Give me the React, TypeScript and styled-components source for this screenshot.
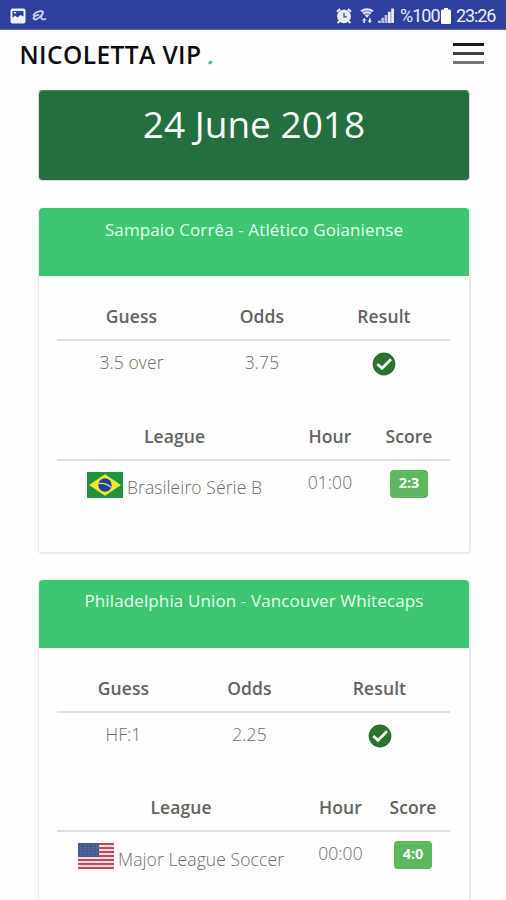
import React from 'react';
import styled, { createGlobalStyle } from 'styled-components';

const GlobalStyle = createGlobalStyle`
  * { box-sizing: border-box; }
  body {
    margin: 0;
    background: #fefefe;
    font-family: 'Open Sans', 'Noto Sans', sans-serif;
    overflow: hidden;
  }
`;

const Screen = styled.div`
  width: 506px;
  height: 900px;
  overflow: hidden;
`;

const StatusBar = styled.div`
  display: flex;
  align-items: center;
  justify-content: space-between;
  height: 30px;
  padding: 0 10px;
  background: #2f3f9e;
  border-bottom: 1px solid #6570b6;
  color: #e9ecf8;
`;

const StatusGroup = styled.div`
  display: flex;
  align-items: center;
  height: 29px;
  padding-top: 2px;
`;

const StatusText = styled.span<{ $width: number; $spacing: number }>`
  width: ${p => p.$width}px;
  font: 400 18px/28px Roboto, sans-serif;
  letter-spacing: ${p => p.$spacing}px;
  white-space: nowrap;
`;

const StatusIcon = styled.svg<{ $gap: number }>`
  display: block;
  flex: none;
  margin-right: ${p => p.$gap}px;
`;

const Header = styled.header`
  display: flex;
  align-items: flex-start;
  justify-content: space-between;
  height: 60px;
  padding: 7px 22px 0 19.5px;
`;

const Brand = styled.h1`
  margin: 0;
  font-size: 24.5px;
  line-height: 34px;
  font-weight: 650;
  letter-spacing: 0.42px;
  color: #0c0c0c;
  white-space: nowrap;
`;

const BrandDot = styled.span`
  display: inline-block;
  margin-left: 2px;
  color: #45c878;
  font-size: 25px;
  transform: skewX(-20deg);
`;

const MenuButton = styled.button`
  display: flex;
  flex-direction: column;
  gap: 6px;
  margin: 6px 0 0;
  padding: 0;
  border: 0;
  background: none;
`;

const MenuLine = styled.span<{ $color: string }>`
  width: 31px;
  height: 3px;
  background: ${p => p.$color};
`;

const Content = styled.main`
  display: flex;
  flex-direction: column;
  padding: 0 35px 0 38px;
`;

const DateCard = styled.section`
  height: 91px;
  margin-bottom: 27px;
  margin-right: 1px;
  border: 1px solid #d5ddd8;
  border-top-color: #4d8a63;
  border-radius: 4px;
  background: #246e40;
  background-clip: padding-box;
  color: #fafdfb;
  font-size: 37px;
  line-height: 65px;
  text-align: center;
`;

const Card = styled.article`
  height: 346px;
  margin-bottom: 25.6px;
  border: 2px solid #ebebeb;
  border-top: 0;
  border-left-width: 1px;
  border-radius: 4px;
  background: #fefefe;
`;

const CardTitle = styled.h2`
  height: 68px;
  margin: 0;
  padding-top: 8.7px;
  border-radius: 4px 4px 0 0;
  background: #3fc672;
  color: #e4fbec;
  font-size: 17px;
  line-height: 26px;
  font-weight: 400;
  letter-spacing: 0.12px;
  text-align: center;
  white-space: nowrap;
`;

const Table = styled.div<{ $height: number }>`
  width: 393px;
  height: ${p => p.$height}px;
  margin-left: 18px;
`;

const Row = styled.div<{ $columns: string }>`
  display: grid;
  grid-template-columns: ${p => p.$columns};
`;

const HeadRow = styled(Row)`
  height: 65px;
  padding-top: 28px;
  border-bottom: 2px solid #dedede;
`;

const HeadCell = styled.div`
  color: #626262;
  font-size: 17.5px;
  line-height: 24px;
  font-weight: 600;
  letter-spacing: 0.1px;
  text-align: center;
`;

const Cell = styled.div`
  padding-top: 9px;
  color: #6c6c6c;
  font-size: 17.5px;
  line-height: 24px;
  font-weight: 300;
  letter-spacing: 0.1px;
  text-align: center;
  white-space: nowrap;
`;

const IconCell = styled(Cell)`
  display: flex;
  justify-content: center;
  padding-top: 11px;
`;

const LeagueCell = styled(Cell)`
  display: flex;
  justify-content: center;
  gap: 4px;
  padding-top: 11px;
`;

const LeagueName = styled.span`
  padding-top: 3.6px;
`;

const Score = styled.span`
  display: block;
  width: 38px;
  height: 28px;
  margin: 0 auto;
  border-radius: 4px;
  background: #5bb85c;
  color: #fff;
  font-size: 14.5px;
  line-height: 26px;
  font-weight: 700;
  letter-spacing: 0;
`;

const CheckIcon = () => (
  <svg width="24" height="24" viewBox="0 0 24 24">
    <circle cx="12" cy="12" r="11.4" fill="#2a732e" />
    <path d="M5.3 11.9 L10 16.3 L19 7.2" fill="none" stroke="#fff" strokeWidth="2.7" />
  </svg>
);

const BrazilFlag = () => (
  <svg width="36" height="26" viewBox="0 0 36 26">
    <rect width="36" height="26" fill="#1f9440" />
    <path d="M18 2.2 L34 13 L18 23.8 L2 13 Z" fill="#f6e62c" />
    <circle cx="18" cy="13" r="6.7" fill="#27408b" />
    <path d="M11.8 11.6 Q19 10.6 24 15.4" fill="none" stroke="#c3d3e4" strokeWidth="1.3" />
  </svg>
);

const stripes = [0, 1, 2, 3, 4, 5, 6];
const stars = [0, 1, 2, 3, 4];

const UsaFlag = () => (
  <svg width="36" height="26" viewBox="0 0 36 26">
    <rect width="36" height="26" fill="#f1dcdf" />
    {stripes.map(i => (
      <rect key={i} y={i * 4} width="36" height="2" fill="#bd4a58" />
    ))}
    <rect width="21" height="14" fill="#435c8f" />
    {stars.map(r =>
      stars.map(c => (
        <circle key={`${r}-${c}`} cx={2.3 + c * 4 + (r % 2)} cy={2 + r * 2.5} r="0.55" fill="#7385ab" />
      )),
    )}
  </svg>
);

const GalleryIcon = () => (
  <StatusIcon $gap={5} width="16" height="16" viewBox="0 0 16 16">
    <rect x="0.5" y="0.5" width="15" height="15" rx="2" fill="#eef0fa" />
    <path d="M2.5 3 H13.5 V8.6 L10.5 7 L7.5 9.5 L5 7.6 L2.5 10 Z" fill="#2f3f9e" />
    <path d="M4 4.8 H6" fill="none" stroke="#eef0fa" strokeWidth="1.4" />
  </StatusIcon>
);

const ScribbleIcon = () => (
  <StatusIcon $gap={0} width="17" height="12" viewBox="0 0 17 12">
    <path
      d="M2.5 5 C5 1 11 0.2 12 2 C12.5 4.5 7 9.5 4 9.5 C1 9 2.5 5.5 7.5 4.8 M12 2.5 C9.5 6.5 9 10.5 14.5 9"
      fill="none"
      stroke="#cbd2ef"
      strokeWidth="1.8"
      strokeLinecap="round"
    />
  </StatusIcon>
);

const AlarmIcon = () => (
  <StatusIcon $gap={8} width="16" height="16" viewBox="0 0 16 16">
    <path d="M1 3.8 L4 1 M15 3.8 L12 1 M3.3 13 L1.8 15.2 M12.7 13 L14.2 15.2" stroke="#edf0fa" strokeWidth="2.2" />
    <circle cx="8" cy="8.3" r="6.9" fill="#edf0fa" />
    <path d="M8 4.8 V8.8 H10.8" fill="none" stroke="#3b499f" strokeWidth="1.3" />
  </StatusIcon>
);

const WifiIcon = () => (
  <StatusIcon $gap={4} width="14" height="16" viewBox="0 0 14 16">
    <path d="M1 3 Q7 -1 13 3 L7 10 Z" fill="#8a94cb" />
    <path d="M0.8 3.2 Q7 -1 13.2 3.2 M3.2 5.6 Q7 3 10.8 5.6" fill="none" stroke="#e7eaf8" strokeWidth="1.6" />
    <path d="M5 7.3 H9 L7 9.6 Z" fill="#f0f2fb" />
    <path d="M2 12.4 L4.2 9.8 L6.4 12.4 H5 V15 H3.4 V12.4 Z M7.6 12.6 H9 V10.2 H10.6 V12.6 H12 L9.8 15.2 Z" fill="#e7eaf8" />
  </StatusIcon>
);

const SignalIcon = () => (
  <StatusIcon $gap={6} width="16" height="15" viewBox="0 0 16 15">
    <path d="M0 15 V12.4 H2.8 V15 Z M3.3 15 V9.8 H6.1 V15 Z M6.6 15 V7 H9.4 V15 Z" fill="#b6bee3" />
    <path d="M9.9 15 V3.8 H12.7 V15 Z M13.2 15 V0.5 H16 V15 Z" fill="#e9ecf8" />
  </StatusIcon>
);

const BatteryIcon = () => (
  <StatusIcon $gap={5} width="10" height="16" viewBox="0 0 10 16">
    <path d="M3 0 H7 V1.5 H8.6 Q10 1.5 10 2.8 V14.7 Q10 16 8.6 16 H1.4 Q0 16 0 14.7 V2.8 Q0 1.5 1.4 1.5 H3 Z" fill="#fff" />
  </StatusIcon>
);

interface Match {
  title: string;
  guess: string;
  odds: string;
  league: string;
  flag: React.ReactNode;
  hour: string;
  score: string;
  betColumns: string;
  infoColumns: string;
}

const matches: Match[] = [
  {
    title: 'Sampaio Corrêa - Atlético Goianiense',
    guess: '3.5 over',
    odds: '3.75',
    league: 'Brasileiro Série B',
    flag: <BrazilFlag />,
    hour: '01:00',
    score: '2:3',
    betColumns: '149px 112px 132px',
    infoColumns: '235px 76px 82px',
  },
  {
    title: 'Philadelphia Union - Vancouver Whitecaps',
    guess: 'HF:1',
    odds: '2.25',
    league: 'Major League Soccer',
    flag: <UsaFlag />,
    hour: '00:00',
    score: '4:0',
    betColumns: '133px 119px 141px',
    infoColumns: '248px 71px 74px',
  },
];

const MatchCard = ({ match }: { match: Match }) => (
  <Card>
    <CardTitle>{match.title}</CardTitle>
    <Table $height={119.5}>
      <HeadRow $columns={match.betColumns}>
        <HeadCell>Guess</HeadCell>
        <HeadCell>Odds</HeadCell>
        <HeadCell>Result</HeadCell>
      </HeadRow>
      <Row $columns={match.betColumns}>
        <Cell>{match.guess}</Cell>
        <Cell>{match.odds}</Cell>
        <IconCell><CheckIcon /></IconCell>
      </Row>
    </Table>
    <Table $height={130}>
      <HeadRow $columns={match.infoColumns}>
        <HeadCell>League</HeadCell>
        <HeadCell>Hour</HeadCell>
        <HeadCell>Score</HeadCell>
      </HeadRow>
      <Row $columns={match.infoColumns}>
        <LeagueCell>
          {match.flag}
          <LeagueName>{match.league}</LeagueName>
        </LeagueCell>
        <Cell>{match.hour}</Cell>
        <Cell><Score>{match.score}</Score></Cell>
      </Row>
    </Table>
  </Card>
);

export default function App() {
  return (
    <Screen>
      <GlobalStyle />
      <StatusBar>
        <StatusGroup>
          <GalleryIcon />
          <ScribbleIcon />
        </StatusGroup>
        <StatusGroup>
          <AlarmIcon />
          <WifiIcon />
          <SignalIcon />
          <StatusText $width={41} $spacing={-1}>%100</StatusText>
          <BatteryIcon />
          <StatusText $width={40} $spacing={-1.1}>23:26</StatusText>
        </StatusGroup>
      </StatusBar>
      <Header>
        <Brand>NICOLETTA VIP <BrandDot>.</BrandDot></Brand>
        <MenuButton aria-label="Menu">
          <MenuLine $color="#1c1c1c" />
          <MenuLine $color="#424242" />
          <MenuLine $color="#777777" />
        </MenuButton>
      </Header>
      <Content>
        <DateCard>24 June 2018</DateCard>
        {matches.map(match => <MatchCard key={match.title} match={match} />)}
      </Content>
    </Screen>
  );
}
